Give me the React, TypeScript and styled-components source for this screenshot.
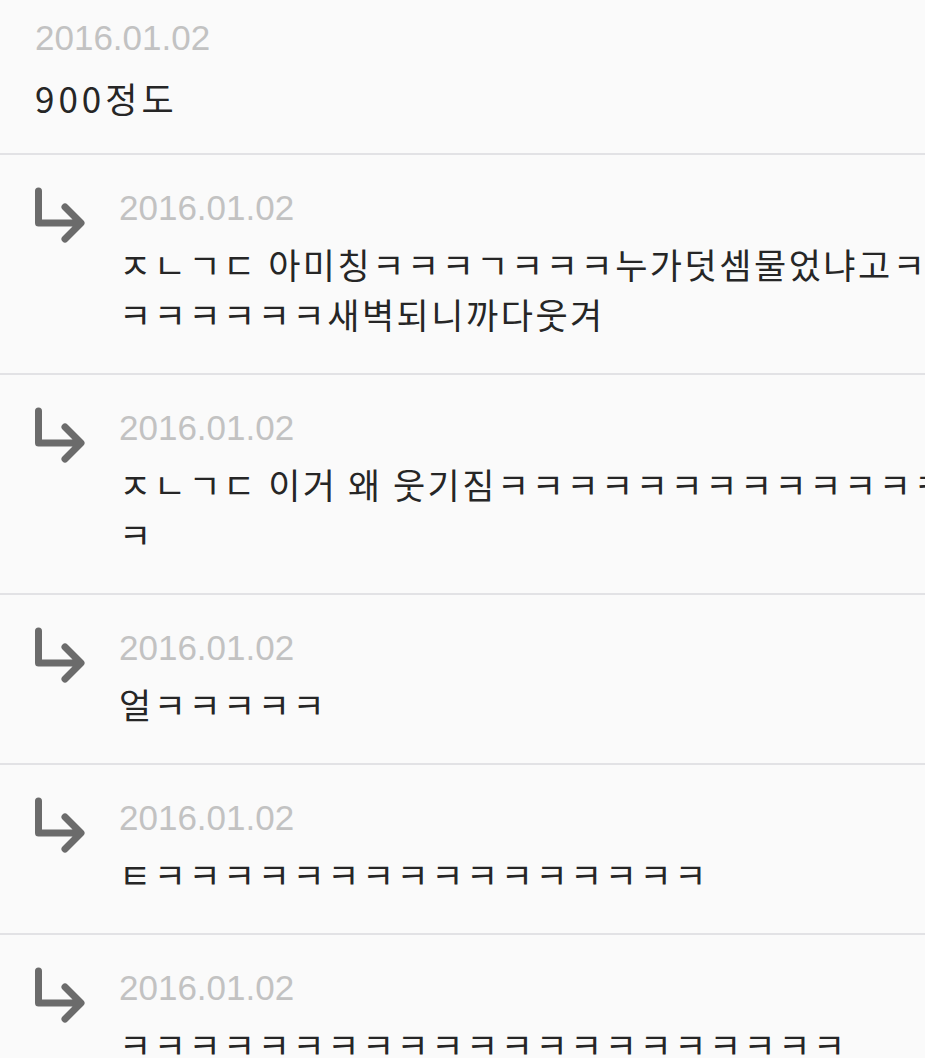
import React from 'react';
import styled, { createGlobalStyle } from 'styled-components';

const GlobalStyle = createGlobalStyle`
  html, body {
    margin: 0;
    padding: 0;
    background: #fafafa;
    overflow: hidden;
  }
  body {
    font-family: "Noto Sans CJK KR", "Noto Sans", sans-serif;
  }
`;

const List = styled.div`
  width: 1000px;
  background: #fafafa;
`;

const Row = styled.div<{ $reply?: boolean }>`
  display: grid;
  grid-template-columns: ${(p) => (p.$reply ? '91px 1fr' : '1fr')};
  padding: ${(p) => (p.$reply ? '32px 31px 34px 28px' : '17px 31px 30px 35px')};
  border-bottom: 2px solid #e2e2e5;
`;

const ArrowIcon = styled.svg`
  display: block;
  width: 60px;
  height: 58px;
  color: #6b6b6b;
`;

const Content = styled.div`
  min-width: 0;
`;

const DateText = styled.div`
  font-family: "Liberation Sans", Arial, sans-serif;
  font-size: 35px;
  line-height: 42px;
  color: #c2c2c2;
`;

const Body = styled.div<{ $reply?: boolean }>`
  margin-top: ${(p) => (p.$reply ? '10px' : '14px')};
  font-family: "Noto Sans CJK KR", "Noto Sans", sans-serif;
  font-size: 35px;
  line-height: 50px;
  letter-spacing: ${(p) => (p.$reply ? '2.5px' : '4px')};
  color: #262626;
  word-break: break-all;
`;

const ReplyArrow = () => (
  <ArrowIcon viewBox="0 0 60 58" fill="none" aria-hidden="true">
    <path
      d="M10.5 4 V36 H52 M37 20 L53 36 L37 52"
      stroke="currentColor"
      strokeWidth={7}
      strokeLinecap="round"
      strokeLinejoin="round"
    />
  </ArrowIcon>
);

type Comment = { reply: boolean; date: string; text: string };

const k = (n: number) => 'ㅋ'.repeat(n);

const comments: Comment[] = [
  { reply: false, date: '2016.01.02', text: '900정도' },
  {
    reply: true,
    date: '2016.01.02',
    text: 'ㅈㄴㄱㄷ 아미칭ㅋㅋㅋㄱㅋㅋㅋ누가덧셈물었냐고' + k(8) + '새벽되니까다웃겨',
  },
  { reply: true, date: '2016.01.02', text: 'ㅈㄴㄱㄷ 이거 왜 웃기짐' + k(14) },
  { reply: true, date: '2016.01.02', text: '얼' + k(5) },
  { reply: true, date: '2016.01.02', text: 'ㅌ' + k(16) },
  { reply: true, date: '2016.01.02', text: k(21) },
];

export default function App() {
  return (
    <>
      <GlobalStyle />
      <List>
        {comments.map((c, i) => (
          <Row key={i} $reply={c.reply}>
            {c.reply && <ReplyArrow />}
            <Content>
              <DateText>{c.date}</DateText>
              <Body $reply={c.reply}>{c.text}</Body>
            </Content>
          </Row>
        ))}
      </List>
    </>
  );
}
